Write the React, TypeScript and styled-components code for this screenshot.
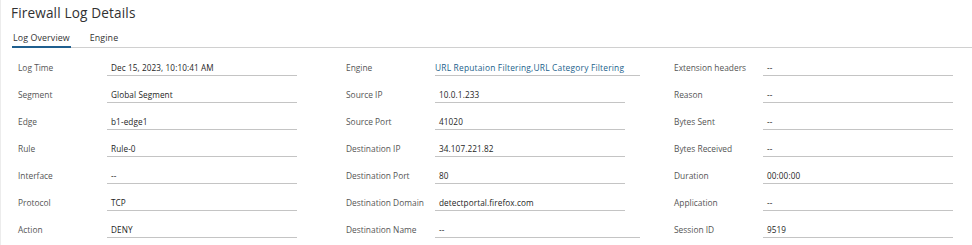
import React, { useState } from 'react'
import styled, { createGlobalStyle } from 'styled-components'

const GlobalStyle = createGlobalStyle`
  html, body {
    margin: 0;
    padding: 0;
    background: #fff;
  }
  body {
    font-family: "Open Sans", "DejaVu Sans", sans-serif;
    color: #333;
  }
`

const Page = styled.div`
  width: 972px;
  height: 245px;
  box-sizing: border-box;
  padding-left: 11px;
  border-left: 1px solid #ececec;
  overflow: hidden;
`

const Title = styled.h1`
  margin: 3px 0 0 -1px;
  font-size: 13.6px;
  line-height: 20px;
  font-weight: 400;
  color: #313131;
  letter-spacing: 0.15px;
`

const TabBar = styled.div`
  display: flex;
  gap: 18px;
  margin-top: 6px;
  border-bottom: 1px solid #d0d0d0;
`

const Tab = styled.button<{ $active?: boolean }>`
  all: unset;
  cursor: pointer;
  font-size: 8.9px;
  line-height: 12px;
  padding: 3px 1px 2px;
  color: #333;
  letter-spacing: 0.1px;
  border-bottom: 2px solid ${p => (p.$active ? '#1f5f8f' : 'transparent')};
  margin-bottom: -1px;
`

const Grid = styled.div`
  display: grid;
  grid-template-columns: repeat(3, 328px);
  padding-left: 6px;
  padding-top: 1px;
`

const Column = styled.div`
  display: flex;
  flex-direction: column;
`

const Field = styled.div`
  display: grid;
  grid-template-columns: 89px auto;
  align-items: end;
  height: 27px;
`

const Label = styled.span`
  font-size: 8.4px;
  line-height: 12px;
  padding-bottom: 2px;
  color: #555;
  white-space: nowrap;
`

const Value = styled.span<{ $wide?: boolean; $link?: boolean }>`
  box-sizing: border-box;
  width: ${p => (p.$wide ? '205px' : '190px')};
  font-size: ${p => (p.$link ? '8.4px' : '8.2px')};
  line-height: 12px;
  font-weight: 500;
  letter-spacing: ${p => (p.$link ? '0.2px' : '0.1px')};
  padding: 0 0 1px ${p => (p.$link ? '0' : '4px')};
  border-bottom: 1px solid #c4c4c4;
  color: ${p => (p.$link ? '#1c5f8c' : '#1e1e1e')};
  white-space: nowrap;
`

type Item = { label: string; value: string; wide?: boolean; link?: boolean }

const columns: Item[][] = [
  [
    { label: 'Log Time', value: 'Dec 15, 2023, 10:10:41 AM' },
    { label: 'Segment', value: 'Global Segment' },
    { label: 'Edge', value: 'b1-edge1' },
    { label: 'Rule', value: 'Rule-0' },
    { label: 'Interface', value: '--' },
    { label: 'Protocol', value: 'TCP' },
    { label: 'Action', value: 'DENY' },
  ],
  [
    { label: 'Engine', value: 'URL Reputaion Filtering,URL Category Filtering', wide: true, link: true },
    { label: 'Source IP', value: '10.0.1.233' },
    { label: 'Source Port', value: '41020' },
    { label: 'Destination IP', value: '34.107.221.82' },
    { label: 'Destination Port', value: '80' },
    { label: 'Destination Domain', value: 'detectportal.firefox.com' },
    { label: 'Destination Name', value: '--', wide: true },
  ],
  [
    { label: 'Extension headers', value: '--' },
    { label: 'Reason', value: '--' },
    { label: 'Bytes Sent', value: '--' },
    { label: 'Bytes Received', value: '--' },
    { label: 'Duration', value: '00:00:00' },
    { label: 'Application', value: '--' },
    { label: 'Session ID', value: '9519' },
  ],
]

export default function App() {
  const [tab, setTab] = useState('overview')
  return (
    <>
      <GlobalStyle />
      <Page>
        <Title>Firewall Log Details</Title>
        <TabBar>
          <Tab $active={tab === 'overview'} onClick={() => setTab('overview')}>Log Overview</Tab>
          <Tab $active={tab === 'engine'} onClick={() => setTab('engine')}>Engine</Tab>
        </TabBar>
        <Grid>
          {columns.map((col, i) => (
            <Column key={i}>
              {col.map(item => (
                <Field key={item.label}>
                  <Label>{item.label}</Label>
                  <Value $wide={item.wide} $link={item.link}>{item.value}</Value>
                </Field>
              ))}
            </Column>
          ))}
        </Grid>
      </Page>
    </>
  )
}
